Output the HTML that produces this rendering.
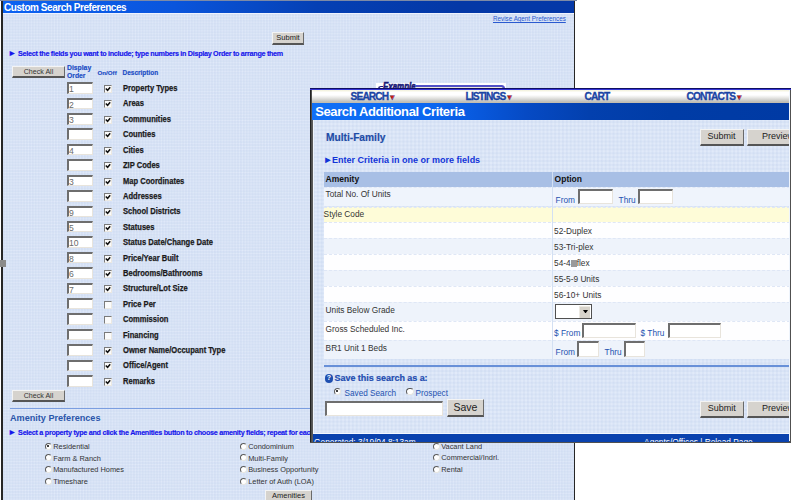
<!DOCTYPE html><html><head><meta charset="utf-8"><style>
*{margin:0;padding:0;box-sizing:border-box}
html,body{width:800px;height:500px;overflow:hidden;background:#fff;font-family:"Liberation Sans",sans-serif;position:relative}
.a{position:absolute;white-space:nowrap}
.grid{background-color:#e1eaf9;background-image:linear-gradient(rgba(150,175,220,.10) 1.5px,transparent 1.5px),linear-gradient(90deg,rgba(150,175,220,.10) 1.5px,transparent 1.5px);background-size:2.9px 2.9px}
.g2{background-size:3.9px 3.9px}
.btn{position:absolute;background:#d6d3ce;border-right:1px solid #6a6a6a;border-bottom:2px solid #555;border-top:1px solid #f4f4f4;border-left:1px solid #f4f4f4;color:#222;text-align:center;white-space:nowrap}
.inp{position:absolute;background:#fff;border-top:2px solid #6e6e6e;border-left:2px solid #6e6e6e;border-right:1px solid #e8e4dc;border-bottom:1px solid #e8e4dc;font-size:8.6px;color:#6a6a6a;line-height:10.5px;padding-left:0}
.cb{position:absolute;width:8px;height:8px;background:#fbfbfb;border-top:1.5px solid #7a7a7a;border-left:1.5px solid #7a7a7a;border-right:1px solid #ebe8e2;border-bottom:1px solid #ebe8e2}
.cb svg{position:absolute;left:0;top:0}
.rd{position:absolute;width:7px;height:7px;border-radius:50%;background:#fff;border:1px solid #5a5a5a;border-right-color:#e8e6e0;border-bottom-color:#e8e6e0;transform:rotate(0deg)}
.rd.on::after{content:"";position:absolute;left:1.5px;top:1.5px;width:2.2px;height:2.2px;border-radius:50%;background:#000}
.hb{font-weight:bold;color:#1a4cc4;-webkit-text-stroke:0.15px currentColor}
.desc{font-weight:bold;color:#1a1a1a;font-size:9px;-webkit-text-stroke:0.25px #1a1a1a;transform:scaleX(0.84);transform-origin:0 0}
.lbl{color:#333;font-size:8px}
</style></head><body>
<div class="a" style="left:0;top:0;width:577px;height:1px;background:#7d8aa6"></div>
<div class="a" style="left:1px;top:1px;width:2px;height:499px;background:#262626"></div>
<div class="a" style="left:573.6px;top:1px;width:1.8px;height:499px;background:#262626"></div>
<div class="a" style="left:3px;top:1px;width:570.6px;height:12px;background:linear-gradient(90deg,#0c62f2 0%,#0a55dc 30%,#0540b4 55%,#0438a6 80%,#0438a8 100%)"></div>
<div class="a" style="left:3px;top:13px;width:570px;height:1px;background:#eef3ff"></div>
<div class="a grid" style="left:3px;top:14px;width:570.6px;height:486px"></div>
<div class="a" style="left:4px;top:1.7px;font-size:10px;line-height:12px;font-weight:bold;color:#fff;letter-spacing:-0.45px">Custom Search Preferences</div>
<div class="a" style="left:493px;top:14px;font-size:6.3px;line-height:9px;color:#2a5ad0;text-decoration:underline">Revise Agent Preferences</div>
<div class="btn" style="left:272px;top:32px;width:32px;height:13px;font-size:7.5px;line-height:10px">Submit</div>
<div class="a hb" style="left:7.9px;top:49px;font-size:7.2px;line-height:9px;letter-spacing:-0.29px;color:#1616ec"><span style="font-size:8.6px;letter-spacing:0;margin-right:0">&#9658;</span> Select the fields you want to include; type numbers in Display Order to arrange them</div>
<div class="btn" style="left:12px;top:66px;width:53px;height:12px;font-size:7.1px;line-height:10.5px;color:#333">Check All</div>
<div class="a hb" style="left:67px;top:64px;font-size:6.8px;line-height:8px">Display<br>Order</div>
<div class="a hb" style="left:97.5px;top:67.5px;font-size:6.2px;line-height:9px">On/Off</div>
<div class="a hb" style="left:122.5px;top:67.5px;font-size:6.5px;line-height:9px">Description</div>
<div class="inp" style="left:67px;top:82.25px;width:26px;height:11.5px">1</div>
<div class="cb" style="left:104px;top:85.05px"><svg width="6" height="6" viewBox="0 0 6 6"><path d="M0.8 2.4 L2.6 4.3 L5.2 1.2" stroke="#111" stroke-width="1.5" fill="none"/></svg></div>
<div class="a desc" style="left:122.5px;top:82.05px;line-height:12px">Property Types</div>
<div class="inp" style="left:67px;top:97.66px;width:26px;height:11.5px">2</div>
<div class="cb" style="left:104px;top:100.46px"><svg width="6" height="6" viewBox="0 0 6 6"><path d="M0.8 2.4 L2.6 4.3 L5.2 1.2" stroke="#111" stroke-width="1.5" fill="none"/></svg></div>
<div class="a desc" style="left:122.5px;top:97.46px;line-height:12px">Areas</div>
<div class="inp" style="left:67px;top:113.07px;width:26px;height:11.5px">3</div>
<div class="cb" style="left:104px;top:115.87px"><svg width="6" height="6" viewBox="0 0 6 6"><path d="M0.8 2.4 L2.6 4.3 L5.2 1.2" stroke="#111" stroke-width="1.5" fill="none"/></svg></div>
<div class="a desc" style="left:122.5px;top:112.87px;line-height:12px">Communities</div>
<div class="inp" style="left:67px;top:128.48px;width:26px;height:11.5px"></div>
<div class="cb" style="left:104px;top:131.28px"><svg width="6" height="6" viewBox="0 0 6 6"><path d="M0.8 2.4 L2.6 4.3 L5.2 1.2" stroke="#111" stroke-width="1.5" fill="none"/></svg></div>
<div class="a desc" style="left:122.5px;top:128.28px;line-height:12px">Counties</div>
<div class="inp" style="left:67px;top:143.89px;width:26px;height:11.5px">4</div>
<div class="cb" style="left:104px;top:146.69px"><svg width="6" height="6" viewBox="0 0 6 6"><path d="M0.8 2.4 L2.6 4.3 L5.2 1.2" stroke="#111" stroke-width="1.5" fill="none"/></svg></div>
<div class="a desc" style="left:122.5px;top:143.69px;line-height:12px">Cities</div>
<div class="inp" style="left:67px;top:159.30px;width:26px;height:11.5px"></div>
<div class="cb" style="left:104px;top:162.10px"><svg width="6" height="6" viewBox="0 0 6 6"><path d="M0.8 2.4 L2.6 4.3 L5.2 1.2" stroke="#111" stroke-width="1.5" fill="none"/></svg></div>
<div class="a desc" style="left:122.5px;top:159.10px;line-height:12px">ZIP Codes</div>
<div class="inp" style="left:67px;top:174.71px;width:26px;height:11.5px">3</div>
<div class="cb" style="left:104px;top:177.51px"><svg width="6" height="6" viewBox="0 0 6 6"><path d="M0.8 2.4 L2.6 4.3 L5.2 1.2" stroke="#111" stroke-width="1.5" fill="none"/></svg></div>
<div class="a desc" style="left:122.5px;top:174.51px;line-height:12px">Map Coordinates</div>
<div class="inp" style="left:67px;top:190.12px;width:26px;height:11.5px"></div>
<div class="cb" style="left:104px;top:192.92px"><svg width="6" height="6" viewBox="0 0 6 6"><path d="M0.8 2.4 L2.6 4.3 L5.2 1.2" stroke="#111" stroke-width="1.5" fill="none"/></svg></div>
<div class="a desc" style="left:122.5px;top:189.92px;line-height:12px">Addresses</div>
<div class="inp" style="left:67px;top:205.53px;width:26px;height:11.5px">9</div>
<div class="cb" style="left:104px;top:208.33px"><svg width="6" height="6" viewBox="0 0 6 6"><path d="M0.8 2.4 L2.6 4.3 L5.2 1.2" stroke="#111" stroke-width="1.5" fill="none"/></svg></div>
<div class="a desc" style="left:122.5px;top:205.33px;line-height:12px">School Districts</div>
<div class="inp" style="left:67px;top:220.94px;width:26px;height:11.5px">5</div>
<div class="cb" style="left:104px;top:223.74px"><svg width="6" height="6" viewBox="0 0 6 6"><path d="M0.8 2.4 L2.6 4.3 L5.2 1.2" stroke="#111" stroke-width="1.5" fill="none"/></svg></div>
<div class="a desc" style="left:122.5px;top:220.74px;line-height:12px">Statuses</div>
<div class="inp" style="left:67px;top:236.35px;width:26px;height:11.5px">10</div>
<div class="cb" style="left:104px;top:239.15px"><svg width="6" height="6" viewBox="0 0 6 6"><path d="M0.8 2.4 L2.6 4.3 L5.2 1.2" stroke="#111" stroke-width="1.5" fill="none"/></svg></div>
<div class="a desc" style="left:122.5px;top:236.15px;line-height:12px">Status Date/Change Date</div>
<div class="inp" style="left:67px;top:251.76px;width:26px;height:11.5px">8</div>
<div class="cb" style="left:104px;top:254.56px"><svg width="6" height="6" viewBox="0 0 6 6"><path d="M0.8 2.4 L2.6 4.3 L5.2 1.2" stroke="#111" stroke-width="1.5" fill="none"/></svg></div>
<div class="a desc" style="left:122.5px;top:251.56px;line-height:12px">Price/Year Built</div>
<div class="inp" style="left:67px;top:267.17px;width:26px;height:11.5px">6</div>
<div class="cb" style="left:104px;top:269.97px"><svg width="6" height="6" viewBox="0 0 6 6"><path d="M0.8 2.4 L2.6 4.3 L5.2 1.2" stroke="#111" stroke-width="1.5" fill="none"/></svg></div>
<div class="a desc" style="left:122.5px;top:266.97px;line-height:12px">Bedrooms/Bathrooms</div>
<div class="inp" style="left:67px;top:282.58px;width:26px;height:11.5px">7</div>
<div class="cb" style="left:104px;top:285.38px"><svg width="6" height="6" viewBox="0 0 6 6"><path d="M0.8 2.4 L2.6 4.3 L5.2 1.2" stroke="#111" stroke-width="1.5" fill="none"/></svg></div>
<div class="a desc" style="left:122.5px;top:282.38px;line-height:12px">Structure/Lot Size</div>
<div class="inp" style="left:67px;top:297.99px;width:26px;height:11.5px"></div>
<div class="cb" style="left:104px;top:300.79px"></div>
<div class="a desc" style="left:122.5px;top:297.79px;line-height:12px">Price Per</div>
<div class="inp" style="left:67px;top:313.40px;width:26px;height:11.5px"></div>
<div class="cb" style="left:104px;top:316.20px"></div>
<div class="a desc" style="left:122.5px;top:313.20px;line-height:12px">Commission</div>
<div class="inp" style="left:67px;top:328.81px;width:26px;height:11.5px"></div>
<div class="cb" style="left:104px;top:331.61px"></div>
<div class="a desc" style="left:122.5px;top:328.61px;line-height:12px">Financing</div>
<div class="inp" style="left:67px;top:344.22px;width:26px;height:11.5px"></div>
<div class="cb" style="left:104px;top:347.02px"><svg width="6" height="6" viewBox="0 0 6 6"><path d="M0.8 2.4 L2.6 4.3 L5.2 1.2" stroke="#111" stroke-width="1.5" fill="none"/></svg></div>
<div class="a desc" style="left:122.5px;top:344.02px;line-height:12px">Owner Name/Occupant Type</div>
<div class="inp" style="left:67px;top:359.63px;width:26px;height:11.5px"></div>
<div class="cb" style="left:104px;top:362.43px"><svg width="6" height="6" viewBox="0 0 6 6"><path d="M0.8 2.4 L2.6 4.3 L5.2 1.2" stroke="#111" stroke-width="1.5" fill="none"/></svg></div>
<div class="a desc" style="left:122.5px;top:359.43px;line-height:12px">Office/Agent</div>
<div class="inp" style="left:67px;top:375.04px;width:26px;height:11.5px"></div>
<div class="cb" style="left:104px;top:377.84px"><svg width="6" height="6" viewBox="0 0 6 6"><path d="M0.8 2.4 L2.6 4.3 L5.2 1.2" stroke="#111" stroke-width="1.5" fill="none"/></svg></div>
<div class="a desc" style="left:122.5px;top:374.84px;line-height:12px">Remarks</div>
<div class="btn" style="left:12px;top:390px;width:53px;height:12px;font-size:7.1px;line-height:10.5px;color:#333">Check All</div>
<div class="a" style="left:10px;top:408px;width:563px;height:1px;background:#7b9ee0"></div>
<div class="a" style="left:10px;top:411.5px;font-size:9.1px;line-height:13px;font-weight:bold;color:#2a55aa">Amenity Preferences</div>
<div class="a hb" style="left:7.9px;top:427.5px;font-size:7.2px;line-height:9px;color:#1616ec;letter-spacing:-0.28px"><span style="font-size:8.6px;letter-spacing:0;margin-right:0">&#9658;</span> Select a property type and click the Amenities button to choose amenity fields; repeat for each property type</div>
<div class="rd on" style="left:44.6px;top:442.8px"></div>
<div class="a lbl" style="left:53.2px;top:442.0px;line-height:10px;font-size:7.4px">Residential</div>
<div class="rd" style="left:44.6px;top:454.40000000000003px"></div>
<div class="a lbl" style="left:53.2px;top:453.6px;line-height:10px;font-size:7.4px">Farm &amp; Ranch</div>
<div class="rd" style="left:44.6px;top:466.0px"></div>
<div class="a lbl" style="left:53.2px;top:465.2px;line-height:10px;font-size:7.4px">Manufactured Homes</div>
<div class="rd" style="left:44.6px;top:477.6px"></div>
<div class="a lbl" style="left:53.2px;top:476.8px;line-height:10px;font-size:7.4px">Timeshare</div>
<div class="rd" style="left:239.6px;top:442.8px"></div>
<div class="a lbl" style="left:248.2px;top:442.0px;line-height:10px;font-size:7.4px">Condominium</div>
<div class="rd" style="left:239.6px;top:454.40000000000003px"></div>
<div class="a lbl" style="left:248.2px;top:453.6px;line-height:10px;font-size:7.4px">Multi-Family</div>
<div class="rd" style="left:239.6px;top:466.0px"></div>
<div class="a lbl" style="left:248.2px;top:465.2px;line-height:10px;font-size:7.4px">Business Opportunity</div>
<div class="rd" style="left:239.6px;top:477.6px"></div>
<div class="a lbl" style="left:248.2px;top:476.8px;line-height:10px;font-size:7.4px">Letter of Auth (LOA)</div>
<div class="rd" style="left:432.6px;top:442.8px"></div>
<div class="a lbl" style="left:441.2px;top:442.0px;line-height:10px;font-size:7.4px">Vacant Land</div>
<div class="rd" style="left:432.6px;top:454.2px"></div>
<div class="a lbl" style="left:441.2px;top:453.4px;line-height:10px;font-size:7.4px">Commercial/Indrl.</div>
<div class="rd" style="left:432.6px;top:465.6px"></div>
<div class="a lbl" style="left:441.2px;top:464.8px;line-height:10px;font-size:7.4px">Rental</div>
<div class="btn" style="left:265px;top:490px;width:47px;height:13px;font-size:7.5px;line-height:10px">Amenities</div>
<div class="a" style="left:0;top:260px;width:6px;height:7px;background:#8a8a8a"></div>
<div class="a" style="left:376px;top:82.8px;width:129.5px;height:5.2px;background:#fff;overflow:hidden"></div>
<div class="a" style="left:415.5px;top:86.7px;width:87px;height:1.3px;background:#ebe8dc"></div>
<div class="a" style="left:415.5px;top:85.2px;width:89px;height:4px;border-top:2px solid #5050c8;border-right:2px solid #5050c8;border-top-right-radius:3.5px"></div>
<div class="a" style="left:377.5px;top:85.6px;width:5px;height:4px;border-top:1.6px solid #1a1a80;border-left:1.6px solid #1a1a80;border-top-left-radius:3px"></div>
<div class="a" style="left:376px;top:80px;width:40px;height:7.6px;overflow:hidden"><div style="position:absolute;left:7px;top:1.2px;font-size:11px;line-height:11px;font-weight:bold;font-style:italic;color:#1a1a78;-webkit-text-stroke:0.7px #1a1a78;transform:scaleX(0.72);transform-origin:0 0">Example</div></div>
<div class="a" style="left:309.6px;top:88px;width:481.4px;height:354.5px;background:#505050;overflow:hidden">
<div class="a" style="left:0;top:0;width:481.4px;height:1px;background:#101060"></div>
<div class="a" style="left:0;top:1px;width:481.4px;height:0.8px;background:#3434d8"></div>
<div class="a" style="left:0.4px;top:1.5px;width:1.2px;height:352px;background:#222"></div>
<div class="a" style="left:2.4px;top:1.5px;width:0.8px;height:352px;background:#5a5a5a"></div>
<div class="a grid g2" style="left:3.2px;top:1.6px;width:476.4px;height:351px"></div>
<div class="a" style="left:3.2px;top:1.6px;width:0.8px;height:351px;background:#eef4fc"></div>
<div class="a" style="left:479.0px;top:1.6px;width:0.6px;height:351px;background:#eef4fc"></div>
<div class="a" style="left:0;top:0;width:479.6px;height:354px;overflow:hidden">
<div class="a" style="left:2.4px;top:1.8px;width:477.6px;height:13.1px;background:linear-gradient(180deg,#f2f0d8 0%,#ffffff 18%,#ffffff 38%,#e6e6e4 60%,#c6c6c2 85%,#bfbcb4 93%,#c8c0ac 100%)"></div>
<div class="a" style="left:41px;top:3.2px;font-size:10.2px;line-height:12px;font-weight:bold;color:#1a44a4;letter-spacing:-0.9px;-webkit-text-stroke:0.3px #1a44a4">SEARCH<span style="color:#d02010;font-size:8px;letter-spacing:0;margin-left:0px">&#9660;</span></div>
<div class="a" style="left:156px;top:3.2px;font-size:10.2px;line-height:12px;font-weight:bold;color:#1a44a4;letter-spacing:-0.9px;-webkit-text-stroke:0.3px #1a44a4">LISTINGS<span style="color:#d02010;font-size:8px;letter-spacing:0;margin-left:0px">&#9660;</span></div>
<div class="a" style="left:275px;top:3.2px;font-size:10.2px;line-height:12px;font-weight:bold;color:#1a44a4;letter-spacing:-0.9px;-webkit-text-stroke:0.3px #1a44a4">CART</div>
<div class="a" style="left:377px;top:3.2px;font-size:10.2px;line-height:12px;font-weight:bold;color:#1a44a4;letter-spacing:-0.9px;-webkit-text-stroke:0.3px #1a44a4">CONTACTS<span style="color:#d02010;font-size:8px;letter-spacing:0;margin-left:0px">&#9660;</span></div>
<div class="a" style="left:2.4px;top:14.9px;width:477.6px;height:16.8px;background:linear-gradient(90deg,#1070f6 0%,#0a66f0 25%,#0858dc 35%,#064ac4 45%,#0340ae 58%,#003ca6 75%,#003aa4 100%)"></div>
<div class="a" style="left:5.6px;top:14.7px;font-size:13px;line-height:17px;font-weight:bold;color:#fff;letter-spacing:-0.38px">Search Additional Criteria</div>
<div class="a" style="left:16.4px;top:44px;font-size:10.2px;line-height:12px;font-weight:bold;color:#1e4ca6;-webkit-text-stroke:0.2px #1e4ca6">Multi-Family</div>
<div class="btn" style="left:390px;top:41px;width:44px;height:16.5px;font-size:9px;line-height:13px">Submit</div>
<div class="btn" style="left:437.5px;top:41px;width:50px;height:16.5px;font-size:9px;line-height:13px;text-align:left;padding-left:14px">Preview</div>
<div class="a" style="left:13.6px;top:65.5px;font-size:9px;line-height:12px;font-weight:bold;color:#1234d8"><span style="font-size:9.5px;margin-right:-0.5px">&#9658;</span>Enter Criteria in one or more fields</div>
<div class="a" style="left:14px;top:83.7px;width:466px;height:15px;background:#a8bfe5"></div>
<div class="a" style="left:16px;top:83.7px;font-size:8.5px;line-height:15px;font-weight:bold;color:#111">Amenity</div>
<div class="a" style="left:245px;top:83.7px;font-size:8.5px;line-height:15px;font-weight:bold;color:#111">Option</div>
<div class="a" style="left:14px;top:98.70px;width:466px;height:19.80px;background:#eff4fc;border-top:1px dashed #dfe7f6"></div>
<div class="a lbl" style="left:16px;top:101.20px;font-size:8.3px;line-height:10px">Total No. Of Units</div>
<div class="a" style="left:14px;top:118.50px;width:466px;height:15.50px;background:#fefcd8;border-top:1px dashed #dfe7f6"></div>
<div class="a lbl" style="left:14px;top:121.00px;font-size:8.3px;line-height:10px">Style Code</div>
<div class="a" style="left:14px;top:134.00px;width:466px;height:16.00px;background:#fefeff;border-top:1px dashed #dfe7f6"></div>
<div class="a lbl" style="left:244.5px;top:138.00px;font-size:8.3px;line-height:10px">52-Duplex</div>
<div class="a" style="left:14px;top:150.00px;width:466px;height:16.00px;background:#eef3fb;border-top:1px dashed #dfe7f6"></div>
<div class="a lbl" style="left:244.5px;top:154.00px;font-size:8.3px;line-height:10px">53-Tri-plex</div>
<div class="a" style="left:14px;top:166.00px;width:466px;height:16.00px;background:#fefeff;border-top:1px dashed #dfe7f6"></div>
<div class="a lbl" style="left:244.5px;top:170.00px;font-size:8.3px;line-height:10px">54-4<span style='display:inline-block;width:6px;height:7px;background:#9a9a9a;vertical-align:-1px'></span>flex</div>
<div class="a" style="left:14px;top:182.00px;width:466px;height:16.00px;background:#eef3fb;border-top:1px dashed #dfe7f6"></div>
<div class="a lbl" style="left:244.5px;top:186.00px;font-size:8.3px;line-height:10px">55-5-9 Units</div>
<div class="a" style="left:14px;top:198.00px;width:466px;height:16.00px;background:#fefeff;border-top:1px dashed #dfe7f6"></div>
<div class="a lbl" style="left:244.5px;top:202.00px;font-size:8.3px;line-height:10px">56-10+ Units</div>
<div class="a" style="left:14px;top:214.00px;width:466px;height:19.00px;background:#eef3fb;border-top:1px dashed #dfe7f6"></div>
<div class="a lbl" style="left:16px;top:216.50px;font-size:8.3px;line-height:10px">Units Below Grade</div>
<div class="a" style="left:14px;top:233.00px;width:466px;height:19.00px;background:#fefeff;border-top:1px dashed #dfe7f6"></div>
<div class="a lbl" style="left:16px;top:235.50px;font-size:8.3px;line-height:10px">Gross Scheduled Inc.</div>
<div class="a" style="left:14px;top:252.00px;width:466px;height:19.00px;background:#eef3fb;border-top:1px dashed #dfe7f6"></div>
<div class="a lbl" style="left:16px;top:254.50px;font-size:8.3px;line-height:10px">BR1 Unit 1 Beds</div>
<div class="a" style="left:242px;top:83.7px;width:1px;height:275.3px;background:#d3e0f3"></div>
<div class="a" style="left:246.0px;top:106.5px;font-size:8.3px;line-height:10px;color:#2452b0">From</div>
<div class="inp" style="left:268.0px;top:100.6px;width:35.5px;height:15.8px"></div>
<div class="a" style="left:309.0px;top:106.5px;font-size:8.3px;line-height:10px;color:#2452b0">Thru</div>
<div class="inp" style="left:328.0px;top:100.6px;width:35.6px;height:15.8px"></div>
<div class="a" style="left:245.4px;top:215.9px;width:36.8px;height:15.1px;background:#fff;border:1.5px solid #505050;border-top-width:1.8px;border-left-width:1.8px"></div>
<div class="a" style="left:269.8px;top:217.6px;width:10.8px;height:12px;background:#d6d2ca;border-top:1px solid #ece9e2;border-left:1px solid #ece9e2"></div>
<svg class="a" style="left:273px;top:221.8px" width="5" height="3.5" viewBox="0 0 5 3.5"><path d="M0 0H5L2.5 3.5Z" fill="#000"/></svg>
<div class="a" style="left:244.5px;top:240.0px;font-size:8.3px;line-height:10px;color:#2452b0">$ From</div>
<div class="inp" style="left:272.5px;top:234.5px;width:53.5px;height:15.5px"></div>
<div class="a" style="left:331.0px;top:240.0px;font-size:8.3px;line-height:10px;color:#2452b0">$ Thru</div>
<div class="inp" style="left:358.0px;top:234.5px;width:53.8px;height:15.5px"></div>
<div class="a" style="left:246.0px;top:259.0px;font-size:8.3px;line-height:10px;color:#2452b0">From</div>
<div class="inp" style="left:267.5px;top:253.0px;width:21.5px;height:16.0px"></div>
<div class="a" style="left:295.0px;top:259.0px;font-size:8.3px;line-height:10px;color:#2452b0">Thru</div>
<div class="inp" style="left:314.0px;top:253.0px;width:21.5px;height:16.0px"></div>
<div class="a" style="left:14px;top:277px;width:466px;height:1.5px;background:#6890d8"></div>
<div class="a" style="left:15px;top:286px;width:8.5px;height:8.5px;border-radius:50%;background:#1e4fb0;color:#fff;font-size:7px;line-height:8.5px;text-align:center;font-weight:bold">?</div>
<div class="a" style="left:25px;top:285px;font-size:9px;line-height:11px;font-weight:bold;color:#1e4cb0;letter-spacing:-0.05px;-webkit-text-stroke:0.2px #1e4cb0">Save this search as a:</div>
<div class="rd on" style="left:24px;top:299.6px;width:7.5px;height:7.5px"></div>
<div class="a" style="left:35px;top:299.8px;font-size:8.2px;line-height:11px;color:#2452b0">Saved Search</div>
<div class="rd" style="left:96.5px;top:299.6px;width:7.5px;height:7.5px"></div>
<div class="a" style="left:106px;top:299.8px;font-size:8.2px;line-height:11px;color:#2452b0">Prospect</div>
<div class="inp" style="left:15px;top:313px;width:118.6px;height:15px"></div>
<div class="btn" style="left:137.5px;top:310.7px;width:36.5px;height:18px;font-size:10.5px;line-height:15px">Save</div>
<div class="btn" style="left:390px;top:313.25px;width:44.5px;height:16.25px;font-size:9px;line-height:13px">Submit</div>
<div class="btn" style="left:437.5px;top:313.25px;width:50px;height:16.25px;font-size:9px;line-height:13px;text-align:left;padding-left:14px">Preview</div>
<div class="a" style="left:3px;top:344.5px;width:477px;height:1.5px;background:#f4f8ff"></div>
<div class="a" style="left:3px;top:346px;width:477px;height:8px;background:#0a42ae;overflow:hidden"><div class="a" style="left:1.5px;top:2.5px;font-size:8.3px;line-height:10px;color:#fff">Generated: 3/19/04 8:13am</div><div class="a" style="left:331.5px;top:2.5px;font-size:8.3px;line-height:10px;color:#fff">Agents/Offices | Reload Page</div></div>
</div>
</div>
</body></html>
